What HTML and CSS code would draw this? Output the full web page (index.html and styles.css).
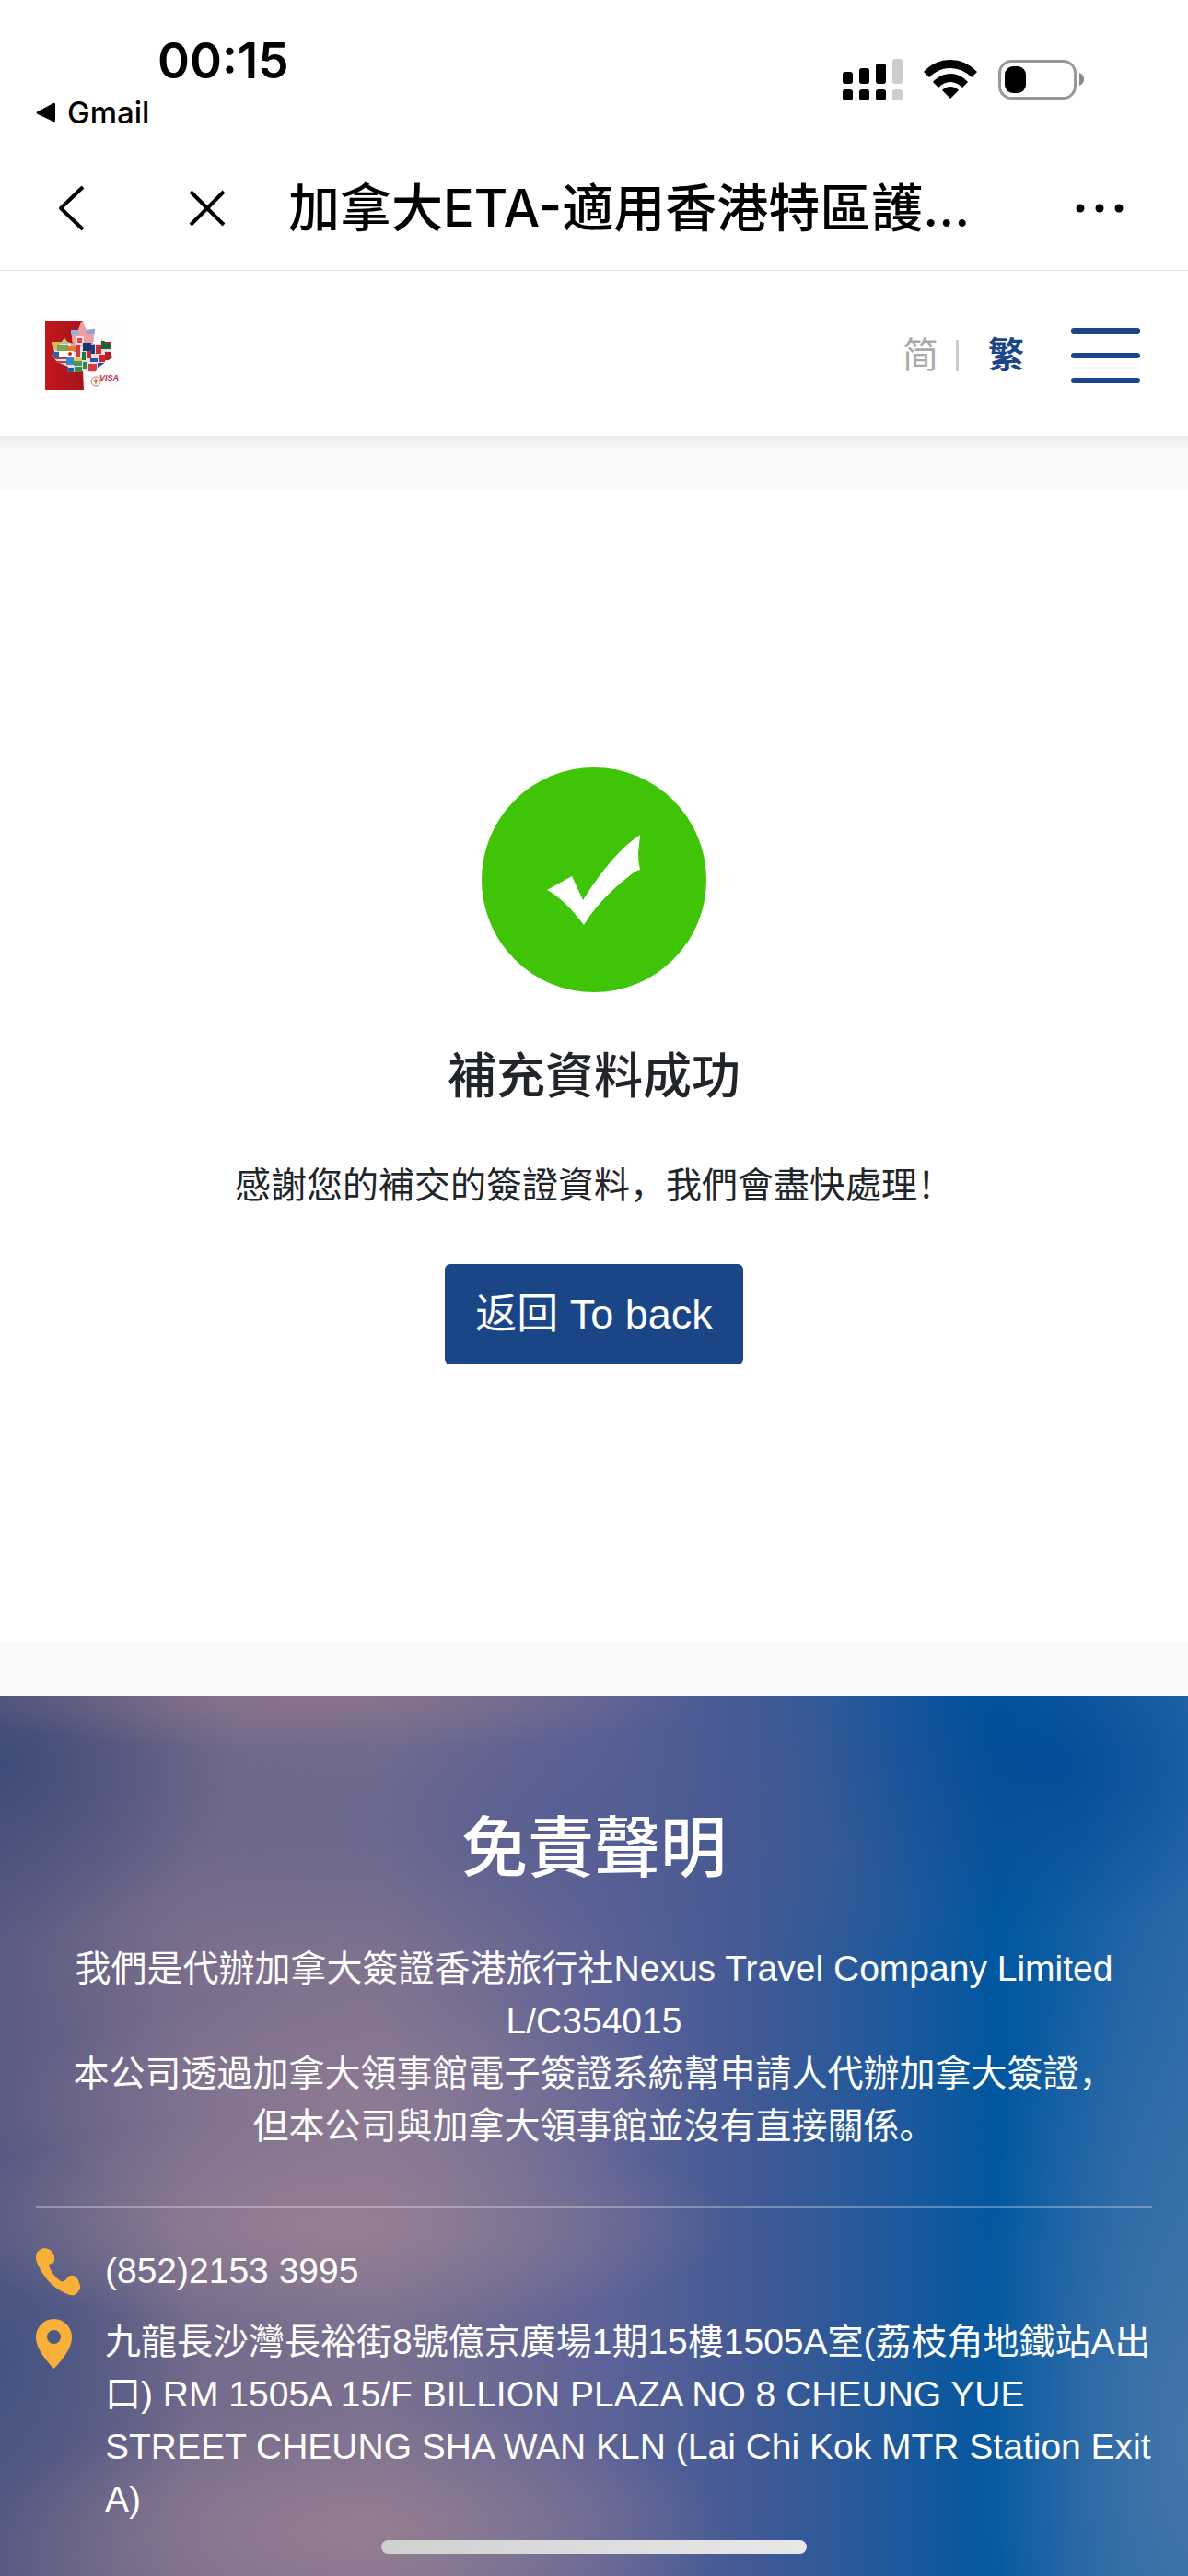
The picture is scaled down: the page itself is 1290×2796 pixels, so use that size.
FILE: index.html
```
<!DOCTYPE html>
<html lang="zh-Hans">
<head>
  <meta charset="UTF-8">
  <meta name="viewport" content="width=device-width, initial-scale=1">
  <title>加拿大ETA-適用香港特區護照</title>
  <link rel="stylesheet" href="styles.css">
</head>
<body>

<!-- status bar -->
<div class="status-bar">
  <div class="status-left">
    <div class="time">00:15</div>
    <a class="back-app" href="#">
      <svg width="22" height="22" viewBox="0 0 22 22"><path d="M2 10 19 1q2-1 2 2v16q0 3-2 2L2 13q-3-1.500 0-3z"/></svg>
      Gmail
    </a>
  </div>
  <div class="status-icons">
    <svg width="65" height="46" viewBox="0 0 65 46">
      <rect x="0" y="14" width="11" height="13" rx="3"/>
      <rect x="18" y="10" width="11" height="17" rx="3"/>
      <rect x="36" y="5" width="11" height="22" rx="3"/>
      <rect x="54" y="0" width="11" height="27" rx="3" fill="#ccc"/>
      <rect x="0" y="33" width="11" height="12" rx="3"/>
      <rect x="18" y="33" width="11" height="12" rx="3"/>
      <rect x="36" y="33" width="11" height="12" rx="3"/>
      <rect x="54" y="33" width="11" height="12" rx="3" fill="#ccc"/>
    </svg>
    <svg width="58" height="46" viewBox="0 0 58 46">
      <path d="M0 14Q12 1 29 1t29 13l-6 6Q42 10 29 10T6 20z"/>
      <path d="M10 25Q18 16 29 16t19 9l-6 6Q36 25 29 25t-13 6z"/>
      <path d="M20 34q4-4 9-4t9 4l-9 9z"/>
    </svg>
    <svg width="94" height="46" viewBox="0 0 94 46">
      <rect x="1.500" y="2.500" width="82" height="40" rx="13" fill="none" stroke="#999" stroke-width="3"/>
      <rect x="7" y="8" width="23" height="29" rx="9"/>
      <path d="M88 15q5 2 5 7t-5 7z" fill="#888"/>
    </svg>
  </div>
</div>

<!-- webview title bar -->
<div class="title-bar">
  <button class="icon-btn btn-back" aria-label="返回">
    <svg width="28" height="50" viewBox="0 0 28 50"><path d="M26 2 2 25l24 23" fill="none" stroke="#000" stroke-width="4" stroke-linejoin="round"/></svg>
  </button>
  <button class="icon-btn btn-close" aria-label="關閉">
    <svg width="40" height="40" viewBox="0 0 40 40"><path d="M2 2l36 36M38 2 2 38" stroke="#000" stroke-width="4"/></svg>
  </button>
  <h1 class="page-title">加拿大ETA-適用香港特區護...</h1>
  <button class="icon-btn" aria-label="更多">
    <svg width="52" height="10" viewBox="0 0 52 10"><circle cx="5" cy="5" r="4.500"/><circle cx="26" cy="5" r="4.500"/><circle cx="47" cy="5" r="4.500"/></svg>
  </button>
</div>

<!-- site header -->
<header class="site-header">
  <a class="logo" href="#" aria-label="eVISA">
    <svg width="82" height="75" viewBox="0 0 82 75">
      <defs>
        <clipPath id="leaf">
          <path d="M40 0L45 10 54 9 52 25 59 25 62 19 65 23 72 23 71 35 73 40 56 52 55 57 43 55 24 56 25 50 13 45 8 39 10 34 8 23 18 23 21 19 24 23 30 25 28 10 36 10z"/>
        </clipPath>
        <linearGradient id="red" x1="0" x2="1"><stop offset="0" stop-color="#c5161d"/><stop offset="1" stop-color="#a5141b"/></linearGradient>
      </defs>
      <rect width="41" height="75" fill="url(#red)"/>
      <rect x="41" width="41" height="75" fill="#fdfcfc"/>
      <g clip-path="url(#leaf)">
        <rect width="82" height="75" fill="#e2dfe0"/>
        <path d="M28 0h26v28H28z" fill="#e9a0a3"/><path d="M33 17h9v9h-9z" fill="#f6e0e0"/><path d="M35 19h5v5h-5z" fill="#e0444a"/>
        <path d="M28 10h8v6h-8z" fill="#88b6d8"/><path d="M45 9h9v6h-9z" fill="#86a8d6"/>
        <path d="M8 20h8v12H8z" fill="#d9b85c"/><path d="M16 18h10v7H16z" fill="#b4c96a"/><path d="M13 27h12v6H13z" fill="#76a858"/>
        <path d="M24 28h9v6h-9z" fill="#e07a2e"/><path d="M33 26h5v14h-5z" fill="#d03a3f"/>
        <path d="M8 34h7v6H8z" fill="#2c63a8"/><path d="M15 33h16v7H15z" fill="#fff"/><circle cx="27" cy="36" r="2" fill="#d5202a"/>
        <path d="M8 40h16v2H8zm0 4h18v2H8z" fill="#b83d45"/><path d="M23 40h8v8h-8z" fill="#3c86cb"/>
        <path d="M31 42h9v7h-9z" fill="#4a9a58"/><path d="M31 41h9v3h-9z" fill="#f1c644"/><path d="M32 50h8v7h-8z" fill="#2b9140"/>
        <path d="M22 51h9v5h-9z" fill="#2256a0"/><path d="M41 24h9v9h-9z" fill="#12386e"/><path d="M40 34h4v9h-4z" fill="#1d7b41"/>
        <path d="M46 33h4v8h-4z" fill="#cc2932"/><path d="M50 26h4v10h-4z" fill="#1c3d7d"/><path d="M55 26h6v10h-6z" fill="#d12a31"/>
        <path d="M61 22h12v9H61z" fill="#18643a"/><path d="M66 21h7v4h-7z" fill="#c91e24"/><path d="M58 37h7v8h-7z" fill="#cf222a"/>
        <path d="M65 34h8v9h-8z" fill="#b21f29"/><path d="M41 45h4v7h-4z" fill="#2e8847"/><path d="M47 47h9v8h-9z" fill="#d83746"/>
        <path d="M49 41h8v4h-8z" fill="#2a559e"/><path d="M57 46h7v5h-7z" fill="#254c95"/>
      </g>
      <path d="M41 54l1 21h-2z" fill="#b4151d"/>
      <circle cx="55" cy="66" r="5" fill="none" stroke="#d1755c"/>
      <path d="M55 62l1 2 2 1-2 2-1 3-1-3-2-2 2-1z" fill="#d1755c"/>
      <text x="59" y="65" class="logo-text">VISA</text>
    </svg>
  </a>
  <div class="header-right">
    <nav class="lang">
      <a href="#" class="lang-item">简</a>
      <span class="lang-line"></span>
      <a href="#" class="lang-item active">繁</a>
    </nav>
    <button class="menu-btn" aria-label="選單"><span></span><span></span><span></span></button>
  </div>
</header>

<!-- result -->
<main class="main">
  <div class="result">
    <svg class="result-icon" width="244" height="244" viewBox="0 0 244 244">
      <circle cx="122" cy="122" r="122" fill="#3fc408"/>
      <path d="M71 133l27-15 12 26q32-51 62-71-1 12-2 20 0 10 2 18-5 1-12 7-33 26-49 53-21-28-40-38z" fill="#fff"/>
    </svg>
    <h2 class="result-title">補充資料成功</h2>
    <p class="result-text">感謝您的補交的簽證資料，我們會盡快處理！</p>
    <button class="btn-primary">返回 To back</button>
  </div>
</main>

<!-- footer -->
<footer class="footer">
  <h3 class="footer-title">免責聲明</h3>
  <p class="disclaimer">
    我們是代辦加拿大簽證香港旅行社Nexus Travel Company Limited L/C354015<br>
    本公司透過加拿大領事館電子簽證系統幫申請人代辦加拿大簽證，<br>
    但本公司與加拿大領事館並沒有直接關係。
  </p>
  <ul class="contact">
    <li>
      <span class="contact-icon">
        <svg width="49" height="52" viewBox="0 0 49 52"><path d="M1 5Q5 0 10 0q8 1 10 9 1 7-3 8-3 0-3 2 4 11 13 17 2 1 5-1 4-6 9-5 5 2 7 11 1 5-6 10-3 1-8-1Q20 44 12 34 2 21 0 12q0-4 1-7z"/></svg>
      </span>
      <a href="tel:85221533995">(852)2153 3995</a>
    </li>
    <li>
      <span class="contact-icon">
        <svg width="39" height="54" viewBox="0 0 39 54"><path fill-rule="evenodd" d="M19.500 0Q28 0 33.500 6T39 20q0 14-19.500 34Q0 34 0 20 0 12 5.500 6T19.500 0zm0 12a7.500 7.500 0 1 0 0 15 7.500 7.500 0 0 0 0-15z"/></svg>
      </span>
      <span>九龍長沙灣長裕街8號億京廣場1期15樓1505A室(荔枝角地鐵站A出口) RM 1505A 15/F BILLION PLAZA NO 8 CHEUNG YUE STREET CHEUNG SHA WAN KLN (Lai Chi Kok MTR Station Exit A)</span>
    </li>
  </ul>
</footer>

<div class="home-indicator"></div>

</body>
</html>
```
FILE: styles.css
```
* {
  box-sizing: border-box;
}
body {
  margin: 0;
  min-height: 100vh;
  display: flex;
  flex-direction: column;
  font-family: "Liberation Sans", "Noto Sans CJK SC", sans-serif;
  font-size: 39px;
  line-height: 57px;
  color: #212529;
  background: #fff;
}
a {
  color: inherit;
  text-decoration: none;
}
button {
  font-family: inherit;
  border: none;
  cursor: pointer;
}
svg {
  display: block;
}
h1, h2, h3, p, ul {
  margin: 0;
  padding: 0;
}

/* status bar */
.status-bar {
  display: flex;
  justify-content: space-between;
  padding: 36px 112px 16px 39px;
  font-family: Inter, sans-serif;
  color: #000;
}
.time {
  padding-left: 132px;
  font-size: 53px;
  font-weight: 600;
  line-height: 60px;
}
.back-app {
  display: flex;
  align-items: center;
  gap: 12px;
  font-size: 33px;
  font-weight: 500;
  line-height: 48px;
  margin-top: 2px;
}
.status-icons {
  display: flex;
  align-items: flex-start;
  gap: 23px;
  padding-top: 28px;
}

/* title bar */
.title-bar {
  display: flex;
  align-items: center;
  height: 132px;
  padding: 0 70px 4px 64px;
  border-bottom: 1px solid #e5e5e5;
}
.icon-btn {
  padding: 0;
  background: none;
}
.btn-back {
  margin-right: 113px;
}
.btn-close {
  margin-right: 68px;
}
.page-title {
  flex: 1;
  font-family: Inter, "Noto Sans CJK SC", sans-serif;
  font-size: 56px;
  font-weight: 500;
  line-height: 80px;
  color: #000;
  white-space: nowrap;
}

/* site header */
.site-header {
  display: flex;
  align-items: center;
  justify-content: space-between;
  padding: 54px 52px 50px 49px;
}
.logo-text {
  font-size: 9px;
  font-style: italic;
  font-weight: bold;
  fill: #c42b3c;
}
.header-right {
  display: flex;
  align-items: center;
  gap: 51px;
}
.lang {
  display: flex;
  align-items: center;
}
.lang-item {
  color: #aaa;
}
.lang-item.active {
  color: #1a4587;
  font-weight: bold;
}
.lang-line {
  width: 3px;
  height: 34px;
  margin: 0 32px 0 19px;
  background: #ccc;
}
.menu-btn {
  display: flex;
  flex-direction: column;
  gap: 21px;
  width: 75px;
  padding: 0;
  background: none;
}
.menu-btn span {
  height: 6px;
  border-radius: 3px;
  background: #1a4587;
}

/* result */
.main {
  padding: 59px 0;
  background: linear-gradient(#ececec, #fafafa 15px);
}
.result {
  display: flex;
  flex-direction: column;
  align-items: center;
  padding: 301px 39px;
  background: #fff;
  text-align: center;
}
.result-title {
  margin-top: 60px;
  font-size: 53px;
  font-weight: 500;
  line-height: 64px;
}
.result-text {
  margin-top: 57px;
}
.btn-primary {
  margin-top: 57px;
  padding: 21px 33px;
  font-size: 45px;
  line-height: 67px;
  color: #fff;
  background: #1a4587;
  border-radius: 6px;
}

/* footer */
.footer {
  flex: 1;
  padding: 122px 39px 40px;
  color: #fff;
  background:
    radial-gradient(ellipse 420px 60px at 27% 0%, rgba(150, 120, 135, 0.6), transparent),
    radial-gradient(ellipse 260px 190px at 0% 8%, rgba(50, 68, 115, 0.7), transparent),
    radial-gradient(ellipse 560px 190px at 48% 14%, rgba(75, 88, 142, 0.5), transparent),
    radial-gradient(ellipse 320px 150px at 27% 31%, rgba(145, 122, 143, 0.4), transparent),
    radial-gradient(ellipse 380px 120px at 30% 46%, rgba(155, 130, 150, 0.6), transparent),
    radial-gradient(ellipse 430px 120px at 28% 60%, rgba(158, 133, 148, 0.8), transparent),
    radial-gradient(ellipse 400px 140px at 30% 95%, rgba(155, 130, 145, 0.8), transparent),
    radial-gradient(ellipse 220px 260px at 0% 76%, rgba(60, 80, 130, 0.7), transparent),
    radial-gradient(ellipse 260px 180px at 88% 8%, rgba(0, 72, 150, 0.8), transparent),
    radial-gradient(ellipse 240px 620px at 100% 85%, rgba(75, 120, 170, 0.8), transparent),
    linear-gradient(90deg, #5a5b83 0%, #746a8b 16%, #7b708f 32%, #5e6397 50%, #455a94 62%, #25599b 73%, #0057a0 84%, #1c62a4 94%, #2668a8 100%);
}
.footer-title {
  font-size: 72px;
  font-weight: 500;
  line-height: 86px;
  text-align: center;
}
.disclaimer {
  margin: 59px 30px 58px;
  text-align: center;
}
.contact {
  display: flex;
  flex-direction: column;
  gap: 20px;
  padding-top: 39px;
  border-top: 3px solid rgba(255, 255, 255, 0.3);
  list-style: none;
}
.contact li {
  display: flex;
}
.contact-icon {
  flex: none;
  width: 75px;
  padding-top: 4px;
  fill: #f9b03b;
}

.home-indicator {
  position: fixed;
  left: 50%;
  bottom: 24px;
  width: 462px;
  height: 15px;
  margin-left: -231px;
  border-radius: 8px;
  background: linear-gradient(90deg, #d0d0d0, #e8e8e8);
}
```
